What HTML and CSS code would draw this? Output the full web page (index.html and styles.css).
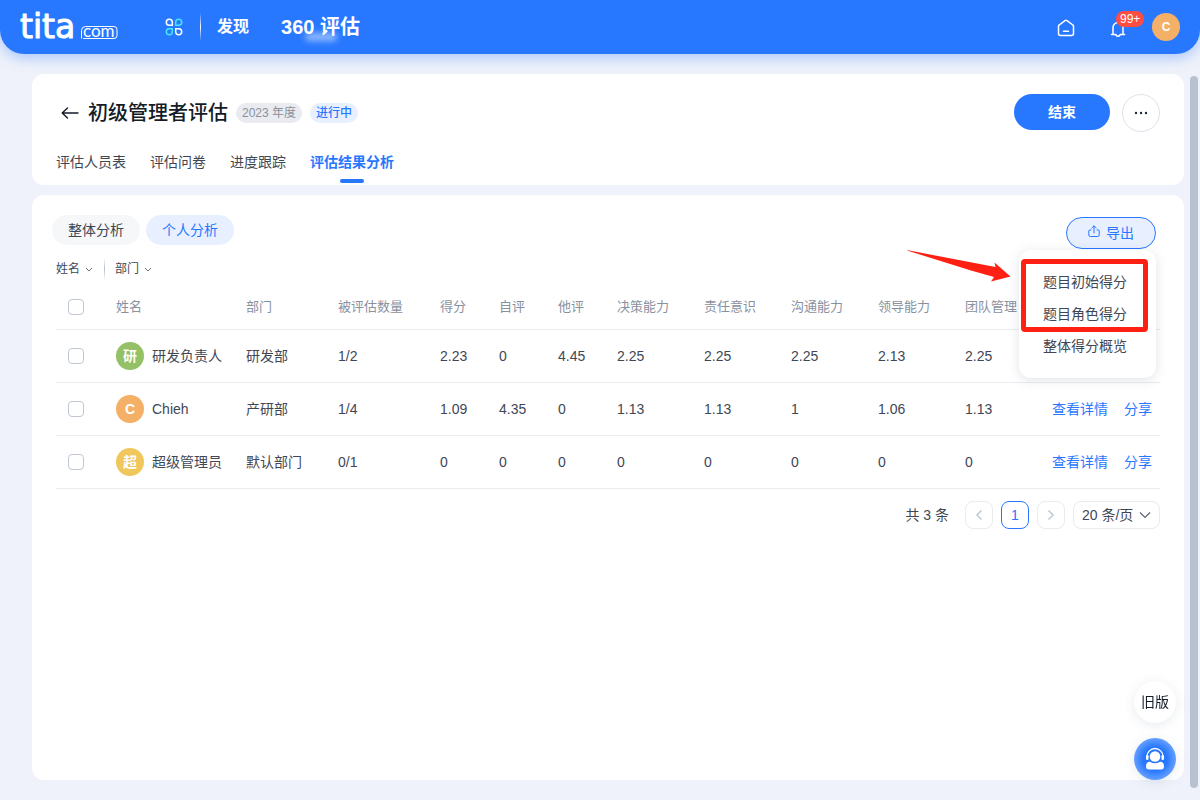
FILE: index.html
```html
<!DOCTYPE html>
<html lang="zh-CN">
<head>
<meta charset="utf-8">
<meta name="viewport" content="width=device-width, initial-scale=1">
<title>初级管理者评估 - 评估结果分析</title>
<link rel="stylesheet" href="styles.css">
</head>
<body>
<header class="topbar">
  <a class="logo" href="#" aria-label="tita.com">
    <svg width="100" height="50" viewBox="0 0 100 50" aria-hidden="true">
      <text class="logo-main" x="0" y="36">tita</text>
      <path d="M61.500 36.500V28.500a4 4 0 0 1 4-4H94a3 3 0 0 1 3 3v6a3 3 0 0 1-3 3H63" fill="none" stroke="#fff"/>
      <text class="logo-sub" x="63" y="35">com</text>
    </svg>
  </a>
  <button class="icon-btn apps" type="button" aria-label="应用">
    <svg width="18" height="18" viewBox="0 0 18 18" fill="none" stroke-width="1.500">
      <path stroke="#fff" d="M7.300 7.300H4.250A3 3 0 1 1 7.300 4.250z"/>
      <path stroke="#45e6f5" d="M10.700 7.300V4.250A3 3 0 1 1 13.750 7.300z"/>
      <path stroke="#45e6f5" d="M7.300 10.700V13.750A3 3 0 1 1 4.250 10.700z"/>
      <path stroke="#fff" d="M10.700 10.700H13.750A3 3 0 1 1 10.700 13.750z"/>
    </svg>
  </button>
  <span class="nav-divider"></span>
  <nav class="nav">
    <a class="nav-link" href="#">发现</a>
    <a class="nav-link nav-current" href="#">360 评估</a>
  </nav>
  <div class="top-actions">
    <button class="icon-btn" type="button" aria-label="首页">
      <svg width="18" height="20" viewBox="0 -2 18 20" fill="none" stroke="#fff" stroke-width="1.500" stroke-linecap="round" stroke-linejoin="round">
        <path d="M1.500 7.200V14.500a2 2 0 0 0 2 2h11a2 2 0 0 0 2-2V7.200a1.500 1.500 0 0 0-.7-1.200L10 1.600a2 2 0 0 0-2 0L2.200 6a1.500 1.500 0 0 0-.7 1.200zM6.500 12.200h5"/>
      </svg>
    </button>
    <button class="icon-btn bell" type="button" aria-label="通知">
      <svg width="16" height="22" viewBox="0 -4 16 22" fill="none" stroke="#fff" stroke-width="1.500" stroke-linecap="round" stroke-linejoin="round">
        <path d="M1.500 14.500h4.300c.5 2.200 3.900 2.200 4.400 0h4.300M3 14.500V7.500a5 5 0 0 1 10 0v7M8 1v1.500"/>
      </svg>
      <span class="badge">99+</span>
    </button>
    <span class="avatar avatar-orange avatar-me">C</span>
  </div>
</header>

<main class="page">
  <section class="card head-card">
    <div class="title-row">
      <button class="icon-btn back" type="button" aria-label="返回">
        <svg width="18" height="14" viewBox="0 0 18 14" fill="none" stroke="#141c28" stroke-width="1.400" stroke-linecap="round" stroke-linejoin="round"><path d="M17 7H1.500M6.500 2L1.200 7l5.300 5"/></svg>
      </button>
      <h1 class="title">初级管理者评估</h1>
      <span class="tag tag-grey">2023 年度</span>
      <span class="tag tag-blue">进行中</span>
      <div class="title-actions">
        <button class="primary" type="button">结束</button>
        <button class="more" type="button" aria-label="更多">
          <svg width="14" height="4" viewBox="0 0 14 4" fill="#1f2a3a"><circle cx="2" cy="2" r="1.200"/><circle cx="7" cy="2" r="1.200"/><circle cx="12" cy="2" r="1.200"/></svg>
        </button>
      </div>
    </div>
    <nav class="tabs">
      <a class="tab" href="#">评估人员表</a>
      <a class="tab" href="#">评估问卷</a>
      <a class="tab" href="#">进度跟踪</a>
      <a class="tab tab-active" href="#" aria-current="page">评估结果分析</a>
    </nav>
  </section>

  <section class="card body-card">
    <div class="toolbar">
      <div class="pills">
        <button class="pill" type="button">整体分析</button>
        <button class="pill pill-active" type="button">个人分析</button>
      </div>
      <div class="export">
        <button class="export-btn" type="button" aria-expanded="true">
          <svg width="12" height="16" viewBox="0 0 12 16" fill="none" stroke="#2878ff" stroke-linecap="round" stroke-linejoin="round"><path d="M3 5H1.800a1 1 0 0 0-1 1v4A1.500 1.500 0 0 0 2.300 11.500h7.400A1.500 1.500 0 0 0 11.200 10V6a1 1 0 0 0-1-1H9M6 8V1M3.800 3L6 .8 8.200 3"/></svg>
          导出
        </button>
        <div class="menu">
          <button class="menu-item" type="button">题目初始得分</button>
          <button class="menu-item" type="button">题目角色得分</button>
          <button class="menu-item" type="button">整体得分概览</button>
          <span class="mark"></span>
          <svg class="mark-arrow" width="104" height="32" viewBox="0 0 104 32" fill="#ff2014" aria-hidden="true"><path d="M0 .5Q0 0 1 .3L88.500 17 87.500 12.500 103.500 26.500 84 31.500 87 27 64 20.500Z"/></svg>
        </div>
      </div>
    </div>

    <div class="filters">
      <button class="filter" type="button">姓名
        <svg width="8" height="5" viewBox="0 0 8 5" fill="none" stroke="#6b7585"><path d="M1 1l3 3 3-3"/></svg>
      </button>
      <span class="filter-divider"></span>
      <button class="filter" type="button">部门
        <svg width="8" height="5" viewBox="0 0 8 5" fill="none" stroke="#6b7585"><path d="M1 1l3 3 3-3"/></svg>
      </button>
    </div>

    <div class="table-wrap">
      <table class="table">
        <colgroup>
          <col class="c-check"><col class="c-name"><col class="c-dept"><col class="c-count">
          <col class="c-score"><col class="c-score"><col class="c-score">
          <col class="c-skill"><col class="c-skill"><col class="c-skill"><col class="c-skill"><col class="c-skill">
          <col class="c-action">
        </colgroup>
        <thead>
          <tr>
            <th><input class="check" type="checkbox" aria-label="全选"></th>
            <th>姓名</th><th>部门</th><th>被评估数量</th><th>得分</th><th>自评</th><th>他评</th>
            <th>决策能力</th><th>责任意识</th><th>沟通能力</th><th>领导能力</th><th>团队管理</th><th></th>
          </tr>
        </thead>
        <tbody>
          <tr>
            <td><input class="check" type="checkbox" aria-label="选择 研发负责人"></td>
            <td><span class="person"><span class="avatar avatar-green">研</span>研发负责人</span></td>
            <td>研发部</td><td>1/2</td><td>2.23</td><td>0</td><td>4.45</td>
            <td>2.25</td><td>2.25</td><td>2.25</td><td>2.13</td><td>2.25</td>
            <td></td>
          </tr>
          <tr>
            <td><input class="check" type="checkbox" aria-label="选择 Chieh"></td>
            <td><span class="person"><span class="avatar avatar-orange">C</span>Chieh</span></td>
            <td>产研部</td><td>1/4</td><td>1.09</td><td>4.35</td><td>0</td>
            <td>1.13</td><td>1.13</td><td>1</td><td>1.06</td><td>1.13</td>
            <td><span class="links"><a href="#">查看详情</a><a href="#">分享</a></span></td>
          </tr>
          <tr>
            <td><input class="check" type="checkbox" aria-label="选择 超级管理员"></td>
            <td><span class="person"><span class="avatar avatar-yellow">超</span>超级管理员</span></td>
            <td>默认部门</td><td>0/1</td><td>0</td><td>0</td><td>0</td>
            <td>0</td><td>0</td><td>0</td><td>0</td><td>0</td>
            <td><span class="links"><a href="#">查看详情</a><a href="#">分享</a></span></td>
          </tr>
        </tbody>
      </table>
    </div>

    <div class="pager">
      <span class="total">共 3 条</span>
      <button class="page-btn" type="button" aria-label="上一页">
        <svg width="8" height="12" viewBox="0 0 8 12" fill="none" stroke="#bfc7d5" stroke-width="1.500"><path d="M6.500 1.500L2 6l4.500 4.500"/></svg>
      </button>
      <button class="page-btn page-current" type="button" aria-current="page">1</button>
      <button class="page-btn" type="button" aria-label="下一页">
        <svg width="8" height="12" viewBox="0 0 8 12" fill="none" stroke="#bfc7d5" stroke-width="1.500"><path d="M1.500 1.500L6 6l-4.500 4.500"/></svg>
      </button>
      <span class="size">
        <select class="size-select" aria-label="每页条数"><option>20 条/页</option></select>
        <svg class="size-arrow" width="12" height="8" viewBox="0 0 12 8" fill="none" stroke="#5a6475" stroke-width="1.200"><path d="M1 1.500l5 5 5-5"/></svg>
      </span>
    </div>
  </section>
</main>

<span class="scroll-thumb"></span>

<aside class="floats">
  <button class="float old" type="button">旧版</button>
  <button class="float service" type="button" aria-label="客服">
    <svg width="22" height="24" viewBox="0 0 22 24">
      <path d="M3 11V9.500a8 8 0 0 1 16 0V11" fill="none" stroke="#fff" stroke-width="1.300"/>
      <rect x="2" y="8" width="2.500" height="5" rx="1.200" fill="#fff"/>
      <rect x="17.500" y="8" width="2.500" height="5" rx="1.200" fill="#fff"/>
      <circle cx="11" cy="9.500" r="5.300" fill="#fff"/>
      <path d="M6 14.800c3.200 2 6.800 2 10 0 2.800 0 4 2 4 4.700 0 2-.8 3-3 3H5c-2.200 0-3-1-3-3 0-2.700 1.200-4.700 4-4.700z" fill="#fff"/>
    </svg>
  </button>
</aside>
</body>
</html>
```

FILE: styles.css
```css
* {
  box-sizing: border-box;
}

body {
  margin: 0;
  min-height: 100vh;
  display: flex;
  flex-direction: column;
  background: #eff2fa;
  color: #3f4755;
  font: 14px/20px "Liberation Sans", "Noto Sans CJK SC", sans-serif;
}

button,
select {
  margin: 0;
  padding: 0;
  border: 0;
  background: none;
  color: inherit;
  font: inherit;
  cursor: pointer;
}

a {
  color: #2878ff;
  text-decoration: none;
}

svg {
  display: block;
  flex: none;
}

/* Top bar */
.topbar {
  display: flex;
  align-items: center;
  height: 54px;
  padding: 0 20px;
  background: #2878ff;
  border-radius: 0 0 24px 24px;
  box-shadow: 0 4px 14px rgba(40, 120, 255, 0.35);
}

.logo-main {
  font: 400 33px "DejaVu Sans", sans-serif;
  fill: #fff;
  stroke: #fff;
  stroke-width: 1px;
  stroke-linejoin: round;
}

.logo-sub {
  font: 400 17px "Lato", sans-serif;
  fill: #fff;
}

.icon-btn {
  display: flex;
  align-items: center;
  justify-content: center;
}

.apps {
  margin-left: 45px;
}

.nav-divider {
  width: 1px;
  height: 28px;
  margin: 0 16px 0 17px;
  background: linear-gradient(transparent, #fff, transparent);
}

.nav {
  display: flex;
  align-items: center;
  gap: 32px;
}

.nav-link {
  position: relative;
  color: #fff;
  font-size: 16px;
  font-weight: 700;
  line-height: 28px;
}

.nav-current {
  font-size: 20px;
}

.nav-current::after {
  content: "";
  position: absolute;
  left: 24px;
  bottom: 0;
  width: 32px;
  height: 8px;
  border-radius: 4px;
  background: rgba(255, 255, 255, 0.5);
  filter: blur(3px);
}

.top-actions {
  display: flex;
  align-items: center;
  margin-left: auto;
}

.bell {
  position: relative;
  margin: 0 26px 0 35px;
}

.badge {
  position: absolute;
  left: 6px;
  top: -5px;
  padding: 0 4px;
  border-radius: 8px;
  background: #ff4d42;
  color: #fff;
  font-size: 12px;
  line-height: 16px;
}

.avatar {
  display: flex;
  align-items: center;
  justify-content: center;
  flex: none;
  width: 28px;
  height: 28px;
  border-radius: 50%;
  color: #fff;
  font-weight: 700;
}

.avatar-me {
  font-size: 12px;
}

.avatar-orange {
  background: #f5b068;
}

.avatar-green {
  background: #94c066;
}

.avatar-yellow {
  background: #efc75c;
}

/* Page */
.page {
  flex: 1;
  display: flex;
  flex-direction: column;
  gap: 10px;
  padding: 20px 16px 20px 32px;
}

.card {
  border-radius: 12px;
  background: #fff;
}

.head-card {
  padding: 20px 24px 2px;
}

.title-row {
  display: flex;
  align-items: center;
}

.back {
  margin: 0 9px 0 5px;
}

.title {
  margin: 0 8px 0 0;
  color: #141c28;
  font-size: 20px;
  font-weight: 500;
  line-height: 28px;
}

.tag {
  margin-right: 8px;
  padding: 0 6px;
  border-radius: 10px;
  font-size: 12px;
  line-height: 20px;
}

.tag-grey {
  background: #e9ebf0;
  color: #89919f;
}

.tag-blue {
  background: #e8f0ff;
  color: #2878ff;
  font-weight: 500;
}

.title-actions {
  display: flex;
  gap: 12px;
  margin-left: auto;
}

.primary {
  width: 96px;
  height: 36px;
  border-radius: 18px;
  background: #2878ff;
  color: #fff;
  font-weight: 700;
}

.more {
  display: flex;
  align-items: center;
  justify-content: center;
  width: 38px;
  height: 38px;
  border: 1px solid #dfe2ea;
  border-radius: 50%;
}

.tabs {
  display: flex;
  gap: 24px;
  margin-top: 9px;
}

.tab {
  position: relative;
  color: #3f4755;
  line-height: 42px;
}

.tab-active {
  color: #2878ff;
  font-weight: 700;
}

.tab-active::after {
  content: "";
  position: absolute;
  left: calc(50% - 12px);
  bottom: 0;
  width: 24px;
  height: 4px;
  border-radius: 2px;
  background: #2878ff;
}

/* Analysis card */
.body-card {
  flex: 1;
}

.toolbar {
  display: flex;
  justify-content: space-between;
  padding: 20px 28px 0 20px;
}

.pills {
  display: flex;
  align-items: flex-start;
  gap: 6px;
}

.pill {
  padding: 0 16px;
  border-radius: 15px;
  background: #f5f7f9;
  line-height: 30px;
}

.pill-active {
  background: #e8f0ff;
  color: #2878ff;
}

.export {
  position: relative;
  padding-top: 2px;
}

.export-btn {
  display: flex;
  align-items: center;
  justify-content: center;
  gap: 6px;
  width: 90px;
  height: 32px;
  border: 1px solid #2878ff;
  border-radius: 16px;
  background: #e8f0ff;
  color: #2878ff;
}

.menu {
  position: absolute;
  z-index: 2;
  top: 35px;
  right: 0;
  width: 137px;
  padding: 16px 0;
  border-radius: 12px;
  background: #fff;
  box-shadow: 0 2px 12px rgba(60, 80, 120, 0.16);
  height: 128px;
}

.menu-item {
  display: block;
  width: 100%;
  padding-left: 24px;
  line-height: 32px;
  text-align: left;
}

.mark {
  position: absolute;
  left: 2px;
  top: 9px;
  width: 127px;
  height: 73px;
  border: 5px solid #ff2014;
  border-radius: 4px;
  pointer-events: none;
}

.mark-arrow {
  position: absolute;
  right: 145px;
  top: 0;
  pointer-events: none;
}

.filters {
  display: flex;
  align-items: center;
  height: 22px;
  margin: 9px 24px 4px;
  font-size: 12px;
}

.filter {
  display: flex;
  align-items: center;
  gap: 5px;
}

.filter-divider {
  width: 1px;
  height: 22px;
  margin: 0 10px 0 11px;
  background: linear-gradient(transparent, #b4bccb, transparent);
}

.table-wrap {
  padding: 0 24px;
}

.table {
  width: 100%;
  border-collapse: separate;
  border-spacing: 0;
  table-layout: fixed;
}

.c-check { width: 60px; }
.c-name { width: 130px; }
.c-dept { width: 92px; }
.c-count { width: 102px; }
.c-score { width: 59px; }
.c-skill { width: 87px; }
.c-action { width: 108px; }

.table th,
.table td {
  padding: 0;
  border-bottom: 1px solid #e9ebef;
  text-align: left;
  white-space: nowrap;
}

.table th {
  height: 46px;
  color: #89919f;
  font-size: 13px;
  font-weight: 400;
}

.table td {
  height: 53px;
}

.check {
  appearance: none;
  display: block;
  width: 16px;
  height: 16px;
  margin: 0 0 0 12px;
  border: 1px solid #bfc7d5;
  border-radius: 4px;
  background: #fff;
}

.check:checked {
  background: #2878ff;
}

.person {
  display: flex;
  align-items: center;
  gap: 8px;
}

.links {
  display: flex;
  gap: 16px;
}

/* Pagination */
.pager {
  display: flex;
  align-items: center;
  justify-content: flex-end;
  gap: 8px;
  margin: 12px 24px;
}

.total {
  margin-right: 8px;
}

.page-btn {
  display: flex;
  align-items: center;
  justify-content: center;
  width: 28px;
  height: 28px;
  border: 1px solid #e9ebf0;
  border-radius: 8px;
}

.page-current {
  border-color: #2878ff;
  color: #2878ff;
}

.size {
  position: relative;
}

.size-select {
  appearance: none;
  display: block;
  width: 87px;
  height: 28px;
  padding: 0 24px 0 8px;
  border: 1px solid #e9ebf0;
  border-radius: 8px;
}

.size-arrow {
  position: absolute;
  right: 9px;
  top: 10px;
  pointer-events: none;
}

/* Overlays */
.scroll-thumb {
  position: fixed;
  top: 76px;
  right: 2px;
  bottom: 12px;
  width: 8px;
  border-radius: 4px;
  background: #b9c1d0;
}

.floats {
  position: fixed;
  right: 24px;
  bottom: 20px;
  display: flex;
  flex-direction: column;
  gap: 15px;
}

.float {
  display: flex;
  align-items: center;
  justify-content: center;
  width: 42px;
  height: 42px;
  border-radius: 50%;
  box-shadow: 0 2px 12px rgba(60, 80, 120, 0.12);
}

.old {
  background: #fff;
  color: #141c28;
}

.service {
  background: radial-gradient(circle, #2878ff 40%, #6ea5ff 75%);
}
```
